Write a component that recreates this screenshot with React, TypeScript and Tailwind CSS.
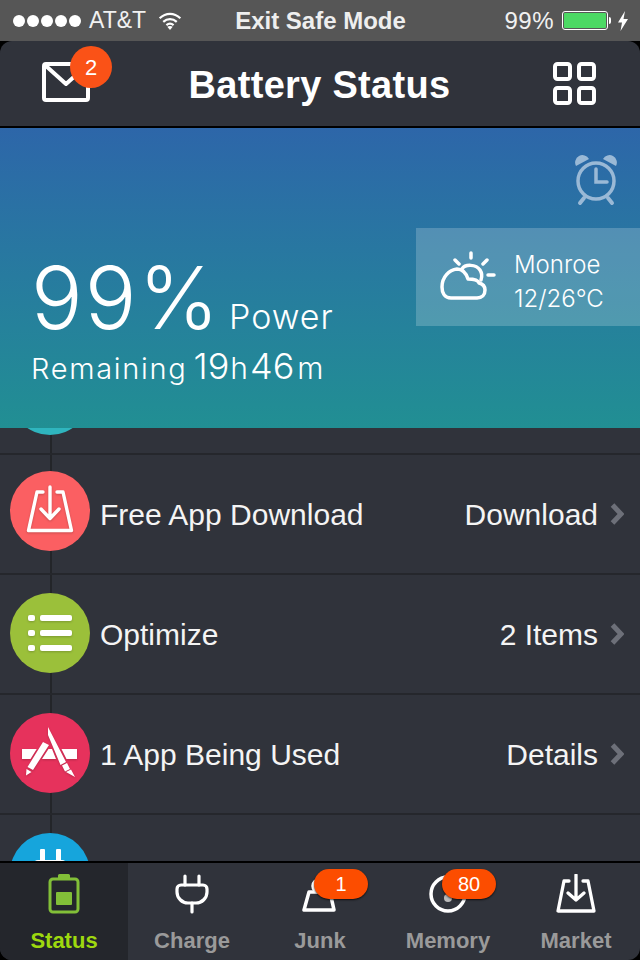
import React from 'react';

const rows = [
  { label: '', value: '', color: 'bg-[#2fb5be]', nudge: '', icon: null },
  { label: 'Free App Download', value: 'Download', color: 'bg-[#fb5f62]', nudge: 'mb-[9px]', icon: <DownloadTray /> },
  { label: 'Optimize', value: '2 Items', color: 'bg-[#9bc03a]', nudge: 'mb-[4px]', icon: <ListIcon /> },
  { label: '1 App Being Used', value: 'Details', color: 'bg-[#e6325c]', nudge: 'mb-[4px]', icon: <AppIcon /> },
  { label: '', value: '', color: 'bg-[#16a5dc]', nudge: 'mb-[4px]', icon: <PlugTop /> },
];

function DownloadTray() {
  return (
    <svg width="50" height="52" viewBox="0 0 50 52" fill="none" stroke="white" strokeWidth="3.400" strokeLinecap="round" strokeLinejoin="round" className="drop-shadow-[0_1px_1px_rgba(0,0,0,0.2)]">
      <path d="M18 7h-6L3.500 45.500h43L38 7h-6" />
      <path d="M25 2v31M16 24l9 9.500 9-9.500" />
    </svg>
  );
}

function ListIcon() {
  return (
    <svg width="46" height="38" viewBox="0 0 46 38" fill="white" className="drop-shadow-[0_1px_1px_rgba(0,0,0,0.2)]">
      <rect x="1" y="1" width="7" height="6" rx="2" />
      <rect x="13" y="1" width="32" height="6" rx="2" />
      <rect x="1" y="16" width="7" height="6" rx="2" />
      <rect x="13" y="16" width="32" height="6" rx="2" />
      <rect x="1" y="31" width="7" height="6" rx="2" />
      <rect x="13" y="31" width="32" height="6" rx="2" />
    </svg>
  );
}

function AppIcon() {
  return (
    <svg width="56" height="52" viewBox="0 0 56 52" fill="white" className="drop-shadow-[0_1px_1px_rgba(0,0,0,0.2)]">
      <path d="M0 22h14.700L8.500 32H0zM26.500 22H30l4 10H20zM39.500 22H55v10H44.500z" />
      <path d="M21 15l6 3-16 25-5.500-3zM4.500 42l5 3-5.500 3.500z" />
      <path d="M26 0l18 35-5.500 3L26 8zM40 38.500l5-2.500 3 6-5 2.500zM44 45l5-2.500 4 7.500z" />
    </svg>
  );
}

function PlugTop() {
  return (
    <svg width="40" height="48" viewBox="0 0 40 48" fill="white">
      <rect x="10" y="0" width="5" height="13" rx="1" />
      <rect x="26" y="0" width="5" height="13" rx="1" />
      <rect x="4" y="11" width="32" height="20" rx="4" />
    </svg>
  );
}

function TabStatus() {
  return (
    <svg width="32" height="40" viewBox="0 0 32 40">
      <rect x="10" y="0" width="12" height="6" rx="1.500" fill="#82bf38" />
      <rect x="2" y="5" width="28" height="33" rx="3" fill="none" stroke="#82bf38" strokeWidth="3" />
      <rect x="8" y="18" width="16" height="13" rx="1" fill="#82bf38" />
    </svg>
  );
}

function TabPlug() {
  return (
    <svg width="34" height="40" viewBox="0 0 34 40" fill="none" stroke="white" strokeWidth="3.200" strokeLinecap="round" strokeLinejoin="round">
      <path d="M10 2v9M24 2v9M17 29v9" />
      <path d="M6 11h22a4 4 0 0 1 4 4v3c0 6-5 11-11 11h-8C7 29 2 24 2 18v-3a4 4 0 0 1 4-4z" />
    </svg>
  );
}

function TabJunk() {
  return (
    <svg width="36" height="40" viewBox="0 0 36 40" fill="none" stroke="white" strokeWidth="3.500" strokeLinecap="round" strokeLinejoin="round">
      <path d="M2 36h30l-4-18H7z" />
      <circle cx="17" cy="12" r="6" />
    </svg>
  );
}

function TabMemory() {
  return (
    <svg width="40" height="40" viewBox="0 0 40 40" fill="none" stroke="white" strokeWidth="3.500">
      <circle cx="20" cy="20" r="17" />
      <circle cx="20" cy="24" r="4" fill="#bbbbbb" stroke="none" />
    </svg>
  );
}

function TabMarket() {
  return (
    <svg width="40" height="40" viewBox="0 0 40 40" fill="none" stroke="white" strokeWidth="3.300" strokeLinecap="round" strokeLinejoin="round">
      <path d="M13 7H8L2 37h36L32 7h-5" />
      <path d="M20 1v25M12 19l8 7 8-7" />
    </svg>
  );
}

const tabs = [
  { label: 'Status', icon: <TabStatus />, badge: '', active: true },
  { label: 'Charge', icon: <TabPlug />, badge: '', active: false },
  { label: 'Junk', icon: <TabJunk />, badge: '1', active: false },
  { label: 'Memory', icon: <TabMemory />, badge: '80', active: false },
  { label: 'Market', icon: <TabMarket />, badge: '', active: false },
];

export default function App() {
  return (
    <div className="w-[640px] h-[960px] overflow-hidden flex flex-col bg-black font-['Liberation_Sans',sans-serif] text-white">
      {/* Status bar */}
      <div className="h-[41px] shrink-0 bg-[#565656] flex items-center justify-between pl-[13px] pr-[12px] text-[24px] leading-none">
        <div className="flex items-center w-[200px]">
          <div className="flex gap-[2px]">
            {[0, 1, 2, 3, 4].map((i) => (
              <span key={i} className="w-[12px] h-[12px] rounded-full bg-white" />
            ))}
          </div>
          <span className="ml-[8px] text-[23px] text-[#f1f1f1]">AT&amp;T</span>
          <svg width="24" height="18" viewBox="0 0 26 20" fill="none" stroke="white" strokeWidth="2.500" className="ml-[12px]">
            <path d="M1.500 7c7-6.500 16-6.500 23 0M5.500 11c4.500-4 10.500-4 15 0M9 14.500c2.500-2 5.500-2 8 0" />
            <path d="M13 20l-3-3.500c2-1.300 4-1.300 6 0z" fill="white" stroke="none" />
          </svg>
        </div>
        <span className="font-bold text-[24px] text-[#eeeeee]">Exit Safe Mode</span>
        <div className="flex items-center justify-end w-[200px]">
          <span className="text-[#f1f1f1] mr-[8px] tracking-[0.5px]">99%</span>
          <span className="w-[46px] h-[19px] rounded-[3px] border border-white p-[1px] flex">
            <span className="flex-1 bg-[#4cd964] rounded-[1px]" />
          </span>
          <span className="w-[2px] h-[7px] bg-white ml-[1px] rounded-r-sm" />
          <svg width="10" height="20" viewBox="0 0 10 20" fill="white" className="ml-[7px]">
            <path d="M7 0L0 11.500h4L2.500 20 10 8H5.500z" />
          </svg>
        </div>
      </div>

      {/* Nav bar */}
      <div className="h-[85px] shrink-0 bg-[#30333b] rounded-t-[12px] flex items-center justify-between pl-[42px] pr-[44px]">
        <div className="relative w-[48px] h-[42px] mt-[-3px]">
          <svg width="48" height="42" viewBox="0 0 48 42" fill="none" stroke="white" strokeWidth="4" strokeLinejoin="round" strokeLinecap="round">
            <rect x="2" y="3" width="44" height="36" rx="2" />
            <path d="M4 5l20 18 20-18" />
          </svg>
          <span className="absolute left-[28px] top-[-15px] w-[42px] h-[42px] rounded-full bg-[#fa5217] flex items-center justify-center text-[22px]">2</span>
        </div>
        <h1 className="font-bold text-[38px] leading-none tracking-[0.3px] mt-[3px] mr-[4px]">Battery Status</h1>
        <svg width="43" height="43" viewBox="0 0 43 43" fill="none" stroke="white" strokeWidth="4">
          <rect x="2" y="2" width="15" height="15" rx="2.500" />
          <rect x="26" y="2" width="15" height="15" rx="2.500" />
          <rect x="2" y="26" width="15" height="15" rx="2.500" />
          <rect x="26" y="26" width="15" height="15" rx="2.500" />
        </svg>
      </div>

      {/* Hero */}
      <div className="h-[300px] shrink-0 mt-[2px] bg-gradient-to-b from-[#2d66a9] to-[#218f93] flex flex-col font-['Inter',sans-serif]">
        <div className="flex justify-end pr-[23px] pt-[26px] h-[100px] shrink-0">
          <svg width="42" height="52" viewBox="0 0 42 52" fill="none" stroke="#9ab9d6" strokeWidth="3.500" strokeLinecap="round">
            <circle cx="21" cy="27" r="18" />
            <path d="M21 15v13h11" />
            <path d="M9 44l-4 5M33 44l4 5" strokeWidth="4" />
            <path d="M1 12a7 7 0 0 1 13-7zM41 12a7 7 0 0 0-13-7z" fill="#9ab9d6" stroke="none" />
          </svg>
        </div>
        <div className="flex justify-end">
          <div className="w-[224px] h-[98px] bg-white/20 flex items-start pl-[24px] pt-[22px]">
            <svg width="56" height="52" viewBox="0 0 56 52" fill="none" stroke="white" strokeWidth="3.500" strokeLinecap="round" strokeLinejoin="round">
              <path d="M11 48C4 48 2 42 2 37C2 27 9 20 17 19C22 19 26 23 28 29C34 29 38 30 39 33C43 34 45 37 45 40C45 45 42 48 37 48Z" />
              <path d="M22 19C25 14 36 14 40 20C42 23 42 27 41 30" />
              <path d="M31 3v5M15 10l4 4M47 10l-4 4M48 25h6" />
            </svg>
            <div className="ml-[18px] mt-[-2px] text-[24px] leading-[34px] font-light">
              <div>Monroe</div>
              <div>12/26°C</div>
            </div>
          </div>
        </div>
        <div className="mt-[-70px] pl-[31px]">
          <div className="flex items-baseline">
            <span className="text-[86px] leading-[84px] font-light tracking-[2px]">99%</span>
            <span className="text-[34px] leading-none font-light ml-[8px] tracking-[1px]">Power</span>
          </div>
          <div className="flex items-baseline mt-[8px] font-light">
            <span className="text-[29px] leading-none tracking-[1.700px]">Remaining</span>
            <span className="text-[36px] leading-none ml-[6px]">19</span>
            <span className="text-[30px] leading-none ml-[1px]">h</span>
            <span className="text-[36px] leading-none ml-[2px]">46</span>
            <span className="text-[30px] leading-none ml-[3px]">m</span>
          </div>
        </div>
      </div>

      {/* Rows */}
      <div className="relative flex-1 min-h-0 overflow-hidden bg-[#30333b]">
        <div className="absolute left-[50px] top-0 bottom-0 w-[2px] bg-[#232529]" />
        <div className="mt-[-93px]">
          {rows.map((row, i) => (
            <div key={i} className="relative h-[120px] border-b-2 border-[#25272c] flex items-center pt-[2px] pl-[10px] pr-[16px]">
              <div className={`w-[80px] h-[80px] rounded-full shrink-0 flex items-center justify-center ${row.color} ${row.nudge}`}>
                {row.icon}
              </div>
              {row.label && (
                <div className="flex-1 flex items-center justify-between pl-[10px] pb-[2px] text-[30px] font-normal text-[#f4f4f4]">
                  <span>{row.label}</span>
                  <span className="flex items-center">
                    {row.value}
                    <svg width="14" height="22" viewBox="0 0 14 22" fill="none" stroke="#6d7079" strokeWidth="5" className="ml-[12px]">
                      <path d="M2.500 2l8.500 9-8.500 9" />
                    </svg>
                  </span>
                </div>
              )}
            </div>
          ))}
        </div>
      </div>

      {/* Tab bar */}
      <div className="h-[97px] shrink-0 mt-[2px] bg-[#30333b] rounded-br-[12px] rounded-bl-[12px] overflow-hidden flex">
        {tabs.map((tab) => (
          <div key={tab.label} className={`relative w-[128px] flex flex-col items-center pt-[10px] ${tab.active ? 'bg-[#24262c]' : ''}`}>
            <div className="h-[42px] flex items-center justify-center">{tab.icon}</div>
            <span className={`mt-[15px] font-bold text-[22px] leading-none ${tab.active ? 'text-[#9ed80f]' : 'text-[#9a9a9a]'}`}>{tab.label}</span>
            {tab.badge && (
              <span className="absolute left-[58px] top-[6px] w-[54px] h-[30px] rounded-full bg-[#fc4d00] shadow-[0_1px_2px_rgba(0,0,0,0.7)] flex items-center justify-center text-[20px] leading-none">
                {tab.badge}
              </span>
            )}
          </div>
        ))}
      </div>
    </div>
  );
}
